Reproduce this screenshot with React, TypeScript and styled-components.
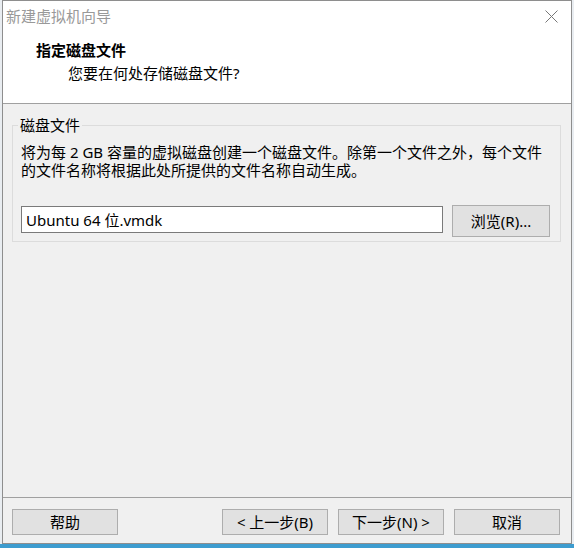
import React from 'react'
import styled, {createGlobalStyle} from 'styled-components'

const GlobalStyle = createGlobalStyle`
  html, body {
    margin: 0;
    padding: 0;
  }
  body {
    background: linear-gradient(to bottom, #e9edf1 0, #e9edf1 544px, #3d9ccf 544px);
    height: 548px;
    overflow: hidden;
    font-family: "Noto Sans", "Noto Sans CJK SC", sans-serif;
    color: #000;
  }
  * {
    box-sizing: border-box;
  }
`

const Window = styled.div`
  width: 570px;
  height: 544px;
  margin-left: 2px;
  border: 1px solid #8e8e8e;
  background: #f0f0f0;
  display: flex;
  flex-direction: column;
`

const TitleBar = styled.div`
  height: 30px;
  background: #fff;
  display: flex;
  align-items: center;
  padding-left: 3px;
`

const Title = styled.div`
  flex: 1;
  color: #999;
  font-size: 15px;
  line-height: 18px;
`

const CloseIcon = styled.svg`
  width: 13px;
  height: 13px;
  margin-right: 13px;
  margin-top: 1px;
`

const Header = styled.div`
  height: 73px;
  background: #fff;
  border-bottom: 1px solid #a0a0a0;
  padding: 10px 0 0 33px;
`

const HeaderTitle = styled.div`
  font-size: 15px;
  line-height: 18px;
  font-weight: bold;
`

const HeaderSub = styled.div`
  margin: 5px 0 0 32px;
  font-size: 15px;
  line-height: 18px;
`

const Body = styled.div`
  flex: 1;
  padding: 12px 10px 0 9px;
`

const Group = styled.fieldset`
  margin: 0;
  min-width: 0;
  border: 1px solid #dcdcdc;
  padding: 0 10px 4px 8px;
`

const GroupLabel = styled.legend`
  margin-left: -3px;
  padding: 0 2px;
  font-size: 15px;
  line-height: 18px;
`

const Description = styled.p`
  margin: 9px 0 0;
  font-size: 15px;
  line-height: 18px;
  white-space: nowrap;
`

const FileRow = styled.div`
  margin-top: 26px;
  display: flex;
  align-items: flex-start;
  gap: 9px;
`

const FileInput = styled.input`
  width: 422px;
  height: 27px;
  margin-top: 1px;
  border: 1px solid #7a7a7a;
  background: #fff;
  padding: 0 0 0 4px;
  font-family: inherit;
  font-size: 15px;
  color: #000;
  outline: none;
`

const Button = styled.button<{$width: number; $height: number}>`
  width: ${p => p.$width}px;
  height: ${p => p.$height}px;
  border: 1px solid #adadad;
  background: #e1e1e1;
  padding: 0;
  font-family: inherit;
  font-size: 15px;
  line-height: 18px;
  color: #000;
`

const Footer = styled.div`
  border-top: 1px solid #a0a0a0;
  padding: 11px 11px 8px 9px;
  display: flex;
  gap: 10px;
`

const Spacer = styled.div`
  flex: 1;
`

const App = (): JSX.Element => {
  return (
    <>
      <GlobalStyle />
      <Window>
        <TitleBar>
          <Title>新建虚拟机向导</Title>
          <CloseIcon viewBox='0 0 13 13'>
            <path d='M0.5 0.5 L12.5 12.5 M12.5 0.5 L0.5 12.5' stroke='#777' strokeWidth='1' fill='none' />
          </CloseIcon>
        </TitleBar>
        <Header>
          <HeaderTitle>指定磁盘文件</HeaderTitle>
          <HeaderSub>您要在何处存储磁盘文件?</HeaderSub>
        </Header>
        <Body>
          <Group>
            <GroupLabel>磁盘文件</GroupLabel>
            <Description>
              将为每 2 GB 容量的虚拟磁盘创建一个磁盘文件。除第一个文件之外，每个文件
              <br />
              的文件名称将根据此处所提供的文件名称自动生成。
            </Description>
            <FileRow>
              <FileInput defaultValue='Ubuntu 64 位.vmdk' />
              <Button $width={98} $height={32}>浏览(R)...</Button>
            </FileRow>
          </Group>
        </Body>
        <Footer>
          <Button $width={106} $height={26}>帮助</Button>
          <Spacer />
          <Button $width={106} $height={26}>&lt; 上一步(B)</Button>
          <Button $width={106} $height={26}>下一步(N) &gt;</Button>
          <Button $width={106} $height={26}>取消</Button>
        </Footer>
      </Window>
    </>
  )
}

export default App
